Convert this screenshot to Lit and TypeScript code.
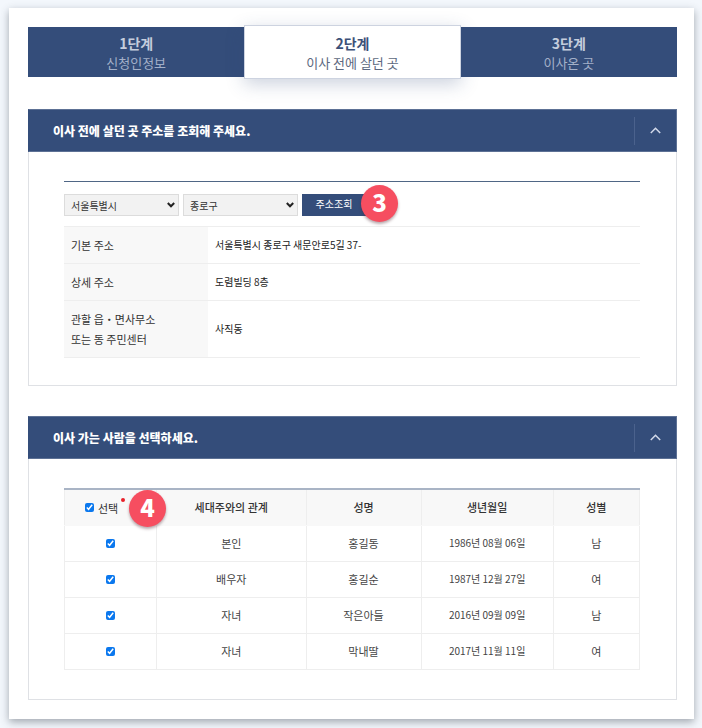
import { LitElement, html, css, svg } from "lit";
import { customElement, property, state } from "lit/decorators.js";
import { classMap } from "lit/directives/class-map.js";

const shared = css`
  *,
  *::before,
  *::after {
    box-sizing: border-box;
  }
`;

interface Person {
  relation: string;
  name: string;
  birth: string;
  gender: string;
  checked: boolean;
}

@customElement("fold-panel")
class FoldPanel extends LitElement {
  @property() heading = "";
  @state() open = true;

  static styles = [
    shared,
    css`
      :host {
        display: block;
      }
      .head {
        display: flex;
        align-items: center;
        justify-content: space-between;
        height: 43px;
        padding-left: 24px;
        background: #344d7a;
        border: 1px solid #5d7195;
        border-left-color: #344d7a;
      }
      .title {
        margin: 0;
        font-size: 12px;
        line-height: 20px;
        font-weight: 800;
        color: #fff;
      }
      .toggle {
        display: flex;
        align-items: center;
        justify-content: center;
        width: 42px;
        height: 28px;
        padding: 0;
        border: 0;
        border-left: 1px solid #4b628d;
        background: none;
      }
      .chevron {
        width: 11px;
        height: 7px;
        fill: none;
        stroke: #d3daea;
        stroke-width: 1.5;
      }
      .closed {
        transform: rotate(180deg);
      }
      .body {
        padding: 29px 36px 27px 35px;
        border: 1px solid #dfe1e5;
        border-top: 0;
      }
    `,
  ];

  render() {
    return html`
      <section>
        <header class="head">
          <h2 class="title">${this.heading}</h2>
          <button
            class="toggle"
            type="button"
            aria-label=${this.heading}
            aria-expanded=${this.open}
            @click=${() => (this.open = !this.open)}
          >
            <svg class=${classMap({ chevron: true, closed: !this.open })} viewBox="0 0 11 7">
              ${svg`<path d="M0.8 6 L5.5 1.3 L10.2 6" />`}
            </svg>
          </button>
        </header>
        <div class="body" ?hidden=${!this.open}><slot></slot></div>
      </section>
    `;
  }
}

@customElement("app-root")
class AppRoot extends LitElement {
  @state() people: Person[] = [
    { relation: "본인", name: "홍길동", birth: "1986년 08월 06일", gender: "남", checked: true },
    { relation: "배우자", name: "홍길순", birth: "1987년 12월 27일", gender: "여", checked: true },
    { relation: "자녀", name: "작은아들", birth: "2016년 09월 09일", gender: "남", checked: true },
    { relation: "자녀", name: "막내딸", birth: "2017년 11월 11일", gender: "여", checked: true },
  ];

  steps = [
    { no: "1단계", label: "신청인정보", active: false },
    { no: "2단계", label: "이사 전에 살던 곳", active: true },
    { no: "3단계", label: "이사온 곳", active: false },
  ];

  static styles = [
    shared,
    css`
      :host {
        display: block;
        min-height: 100vh;
        padding: 8px 8px 9px 9px;
        background: #f3f7fc;
        color: #333;
        font-family: "Noto Sans CJK KR", sans-serif;
        font-size: 11px;
        line-height: 20px;
      }
      .card {
        padding: 19px 17px 19px 19px;
        background: #fff;
        box-shadow: 0 3px 8px rgba(60, 68, 80, 0.45);
      }
      .steps {
        display: grid;
        grid-template-columns: repeat(3, 1fr);
        margin: 0 0 32px;
        padding: 0;
        list-style: none;
      }
      .step {
        display: flex;
        flex-direction: column;
        justify-content: center;
        height: 50px;
        background: #344d7a;
        color: #a3b0c9;
        font-size: 13px;
        line-height: 19px;
        text-align: center;
      }
      .no {
        color: #c5cddd;
        font-size: 14px;
        line-height: 20px;
      }
      .active {
        height: 54px;
        margin: -2px 0;
        background: #fff;
        border: 1px solid #cdd3e0;
        box-shadow: 0 5px 18px rgba(52, 77, 122, 0.25);
        color: #5c6880;
      }
      .active .no {
        color: #3c5078;
      }
      .panels {
        display: flex;
        flex-direction: column;
        gap: 30px;
      }
      .search {
        display: flex;
        gap: 4px;
        padding: 12px 0 10px;
        border-top: 1px solid #4f6685;
      }
      .pick {
        position: relative;
        width: 115px;
        height: 22px;
      }
      .select {
        display: block;
        width: 100%;
        height: 100%;
        padding: 0 20px 0 6px;
        border: 1px solid #dcdcdc;
        border-radius: 0;
        background: #f2f2f2;
        color: #333;
        font-family: inherit;
        font-size: 10px;
        appearance: none;
      }
      .arrow {
        position: absolute;
        top: 8px;
        right: 4px;
        width: 8px;
        height: 6px;
        fill: none;
        stroke: #222;
        stroke-width: 2;
        pointer-events: none;
      }
      .marked {
        position: relative;
      }
      .find {
        display: block;
        width: 64px;
        height: 22px;
        padding: 0 0 2px;
        border: 0;
        background: #344d7a;
        color: #fff;
        font-family: inherit;
        font-size: 10px;
        line-height: 18px;
      }
      .badge {
        position: absolute;
        z-index: 1;
        display: flex;
        align-items: center;
        justify-content: center;
        width: 37px;
        height: 37px;
        padding-bottom: 3px;
        border-radius: 50%;
        background: #f64e60;
        box-shadow: 0 2px 3px rgba(80, 40, 50, 0.4);
        color: #fff;
        font-size: 24px;
        line-height: 36px;
        font-weight: 800;
      }
      .find-badge {
        top: -9px;
        left: 59px;
      }
      .pick-badge {
        top: 2px;
        left: 64px;
      }
      table {
        width: 100%;
        border-collapse: collapse;
      }
      .address th,
      .address td {
        height: 36px;
        padding: 8px 7px;
        border-top: 1px solid #eee;
        border-bottom: 1px solid #eee;
        text-align: left;
      }
      .address th {
        width: 25%;
        background: #f8f8f8;
        font-weight: 400;
      }
      .address td {
        font-size: 10px;
        color: #222;
      }
      .people {
        margin-bottom: 2px;
        table-layout: fixed;
        text-align: center;
      }
      .people th,
      .people td {
        height: 36px;
        padding: 0;
        border: 1px solid #eee;
      }
      .people th {
        border-top: 2px solid #a9b4c5;
        border-bottom-color: #f8f8f8;
        background: #f8f8f8;
        font-weight: 500;
      }
      .people .pick-all {
        width: 16%;
      }
      .people .relation {
        width: 26%;
      }
      .people .name {
        width: 20%;
      }
      .people .birth {
        width: 23%;
      }
      .people td {
        color: #444;
      }
      .people .date {
        font-size: 10px;
      }
      .mark-area {
        position: relative;
      }
      .all {
        display: inline-flex;
        align-items: center;
        gap: 4px;
        padding-right: 18px;
        font-weight: 400;
      }
      .all span {
        position: relative;
      }
      .all span::after {
        content: "";
        position: absolute;
        top: 0;
        right: -7px;
        width: 4px;
        height: 4px;
        border-radius: 50%;
        background: #e8202a;
      }
      .mark-area .pick-badge {
        top: -7px;
      }
      .check {
        display: block;
        width: 9px;
        height: 9px;
        margin: 0 auto;
        accent-color: #0b78ee;
      }
    `,
  ];

  private toggleAll(e: Event) {
    const checked = (e.target as HTMLInputElement).checked;
    this.people = this.people.map((p) => ({ ...p, checked }));
  }

  private toggle(i: number) {
    this.people = this.people.map((p, n) => (n === i ? { ...p, checked: !p.checked } : p));
  }

  private picker(label: string, value: string) {
    return html`<div class="pick">
      <select class="select" aria-label=${label}>
        <option>${value}</option>
      </select>
      <svg class="arrow" viewBox="0 0 8 6">${svg`<path d="M0.8 1 L4 4.3 L7.2 1" />`}</svg>
    </div>`;
  }

  render() {
    return html`
      <main class="card">
        <ol class="steps">
          ${this.steps.map(
            (s) => html`<li class=${classMap({ step: true, active: s.active })}>
              <strong class="no">${s.no}</strong><span>${s.label}</span>
            </li>`
          )}
        </ol>
        <div class="panels">
          <fold-panel heading="이사 전에 살던 곳 주소를 조회해 주세요.">
            <div class="search">
              ${this.picker("시도", "서울특별시")} ${this.picker("시군구", "종로구")}
              <div class="marked">
                <button class="find" type="button">주소조회</button>
                <span class="badge find-badge">3</span>
              </div>
            </div>
            <table class="address">
              <tbody>
                <tr>
                  <th scope="row">기본 주소</th>
                  <td>서울특별시 종로구 새문안로5길 37-</td>
                </tr>
                <tr>
                  <th scope="row">상세 주소</th>
                  <td>도렴빌딩 8층</td>
                </tr>
                <tr>
                  <th scope="row">관할 읍・면사무소<br />또는 동 주민센터</th>
                  <td>사직동</td>
                </tr>
              </tbody>
            </table>
          </fold-panel>
          <fold-panel heading="이사 가는 사람을 선택하세요.">
            <table class="people">
              <thead>
                <tr>
                  <th class="pick-all" scope="col">
                    <div class="mark-area">
                      <label class="all">
                        <input
                          class="check"
                          type="checkbox"
                          .checked=${this.people.every((p) => p.checked)}
                          @change=${this.toggleAll}
                        /><span>선택</span>
                      </label>
                      <span class="badge pick-badge">4</span>
                    </div>
                  </th>
                  <th class="relation" scope="col">세대주와의 관계</th>
                  <th class="name" scope="col">성명</th>
                  <th class="birth" scope="col">생년월일</th>
                  <th scope="col">성별</th>
                </tr>
              </thead>
              <tbody>
                ${this.people.map(
                  (p, i) => html`<tr>
                    <td>
                      <input
                        class="check"
                        type="checkbox"
                        aria-label=${p.name}
                        .checked=${p.checked}
                        @change=${() => this.toggle(i)}
                      />
                    </td>
                    <td>${p.relation}</td>
                    <td>${p.name}</td>
                    <td class="date">${p.birth}</td>
                    <td>${p.gender}</td>
                  </tr>`
                )}
              </tbody>
            </table>
          </fold-panel>
        </div>
      </main>
    `;
  }
}
